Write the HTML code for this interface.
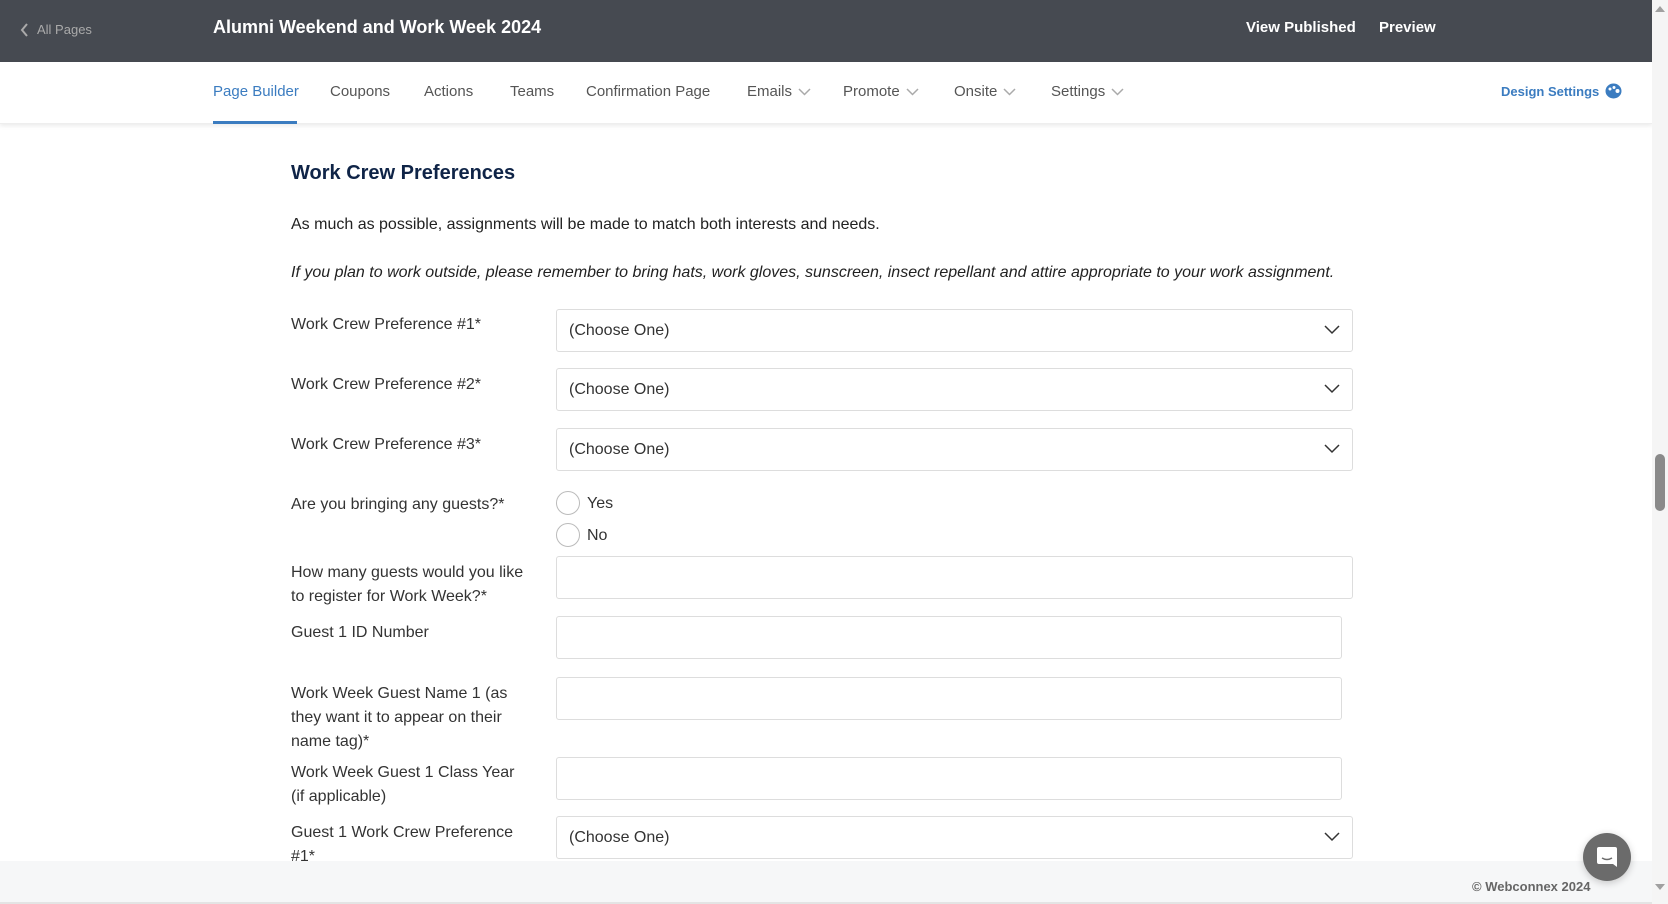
<!DOCTYPE html>
<html><head><meta charset="utf-8"><style>
*{box-sizing:border-box;margin:0;padding:0}
body{width:1668px;height:904px;overflow:hidden;background:#fff;font-family:"Liberation Sans",Arial,sans-serif;position:relative}
.a{position:absolute;white-space:nowrap}
#hdr{position:absolute;left:0;top:0;width:1652px;height:62px;background:#464a51}
#nav{position:absolute;left:0;top:62px;width:1652px;height:62px;background:#fff;box-shadow:0 2px 4px rgba(0,0,0,.08);border-bottom:1px solid #eee}
.nv{position:absolute;top:82px;font-size:15px;color:#555;line-height:20px}
.nv svg{vertical-align:middle;margin-left:6px}
.lbl{position:absolute;left:291px;font-size:16px;color:#333;line-height:24px;white-space:nowrap}
.box{position:absolute;left:556px;width:797px;height:43px;border:1px solid #ddd;border-radius:3px;background:#fff}
.sel{font-size:16px;color:#333;line-height:41px;padding-left:12px}
.sel svg{position:absolute;right:12px;top:15px}
.rad{position:absolute;left:556px;width:24px;height:24px;border:1px solid #bbb;border-radius:50%}
</style></head><body>
<div id="hdr"></div>
<svg class="a" style="left:20px;top:23px" width="10" height="14" viewBox="0 0 10 14"><path d="M7 1L2 7l5 6" fill="none" stroke="#aaa" stroke-width="2"/></svg>
<div class="a" style="left:37px;top:22px;font-size:13px;color:#aaa">All Pages</div>
<div class="a" style="left:213px;top:17px;font-size:18px;font-weight:bold;color:#fff">Alumni Weekend and Work Week 2024</div>
<div class="a" style="left:1246px;top:19px;font-size:15px;color:#fff;font-weight:bold">View Published</div>
<div class="a" style="left:1379px;top:19px;font-size:15px;color:#fff;font-weight:bold">Preview</div>
<div id="nav"></div>
<div class="nv" style="left:213px;color:#3b7cc0">Page Builder</div>
<div class="a" style="left:213px;top:121px;width:84px;height:3px;background:#3b7cc0"></div>
<div class="nv" style="left:330px">Coupons</div>
<div class="nv" style="left:424px">Actions</div>
<div class="nv" style="left:510px">Teams</div>
<div class="nv" style="left:586px">Confirmation Page</div>
<div class="nv" style="left:747px">Emails<svg width="13" height="8"><path d="M1 1l5.5 5.5L12 1" fill="none" stroke="#aaa" stroke-width="1.5"/></svg></div>
<div class="nv" style="left:843px">Promote<svg width="13" height="8"><path d="M1 1l5.5 5.5L12 1" fill="none" stroke="#aaa" stroke-width="1.5"/></svg></div>
<div class="nv" style="left:954px">Onsite<svg width="13" height="8"><path d="M1 1l5.5 5.5L12 1" fill="none" stroke="#aaa" stroke-width="1.5"/></svg></div>
<div class="nv" style="left:1051px">Settings<svg width="13" height="8"><path d="M1 1l5.5 5.5L12 1" fill="none" stroke="#aaa" stroke-width="1.5"/></svg></div>
<div class="a" style="left:1501px;top:84px;font-size:13px;font-weight:bold;color:#3b7cc0">Design Settings</div>
<svg class="a" style="left:1605px;top:83px" width="17" height="16" viewBox="0 0 17 16"><ellipse cx="8.5" cy="8" rx="8" ry="7.5" fill="#3b7cc0"/><circle cx="5" cy="6" r="1.5" fill="#fff"/><circle cx="9" cy="4.5" r="1.5" fill="#fff"/><circle cx="12.5" cy="8" r="2" fill="#fff"/></svg>

<div class="a" style="left:291px;top:162px;font-size:20px;font-weight:bold;color:#0f2447">Work Crew Preferences</div>
<div class="a" style="left:291px;top:216px;font-size:16px;color:#222">As much as possible, assignments will be made to match both interests and needs.</div>
<div class="a" style="left:291px;top:264px;font-size:16px;color:#222;font-style:italic">If you plan to work outside, please remember to bring hats, work gloves, sunscreen, insect repellant and attire appropriate to your work assignment.</div>

<div class="lbl" style="top:313px">Work Crew Preference #1*</div>
<div class="box sel" style="top:309px">(Choose One)<svg width="16" height="10"><path d="M1 1l7 7 7-7" fill="none" stroke="#333" stroke-width="1.5"/></svg></div>
<div class="lbl" style="top:373px">Work Crew Preference #2*</div>
<div class="box sel" style="top:368px">(Choose One)<svg width="16" height="10"><path d="M1 1l7 7 7-7" fill="none" stroke="#333" stroke-width="1.5"/></svg></div>
<div class="lbl" style="top:433px">Work Crew Preference #3*</div>
<div class="box sel" style="top:428px">(Choose One)<svg width="16" height="10"><path d="M1 1l7 7 7-7" fill="none" stroke="#333" stroke-width="1.5"/></svg></div>

<div class="lbl" style="top:493px">Are you bringing any guests?*</div>
<div class="rad" style="top:491px"></div><div class="a" style="left:587px;top:495px;font-size:16px;color:#333">Yes</div>
<div class="rad" style="top:523px"></div><div class="a" style="left:587px;top:527px;font-size:16px;color:#333">No</div>

<div class="lbl" style="top:561px">How many guests would you like<br>to register for Work Week?*</div>
<div class="box" style="top:556px"></div>
<div class="lbl" style="top:621px">Guest 1 ID Number</div>
<div class="box" style="top:616px;width:786px"></div>
<div class="lbl" style="top:682px">Work Week Guest Name 1 (as<br>they want it to appear on their<br>name tag)*</div>
<div class="box" style="top:677px;width:786px"></div>
<div class="lbl" style="top:761px">Work Week Guest 1 Class Year<br>(if applicable)</div>
<div class="box" style="top:757px;width:786px"></div>
<div class="lbl" style="top:821px">Guest 1 Work Crew Preference<br>#1*</div>
<div class="box sel" style="top:816px">(Choose One)<svg width="16" height="10"><path d="M1 1l7 7 7-7" fill="none" stroke="#333" stroke-width="1.5"/></svg></div>

<div class="a" style="left:0;top:861px;width:1652px;height:43px;background:#f6f7f8;border-bottom:2px solid #e4e4e4"></div>
<div class="a" style="left:1472px;top:879px;font-size:13px;font-weight:bold;color:#666">© Webconnex 2024</div>
<div class="a" style="left:1583px;top:833px;width:48px;height:48px;border-radius:50%;background:#6b6b6b;box-shadow:0 2px 8px rgba(0,0,0,.2)"></div>
<svg class="a" style="left:1596px;top:846px" width="22" height="22" viewBox="0 0 22 22"><path d="M3 1h16a2 2 0 0 1 2 2v18l-4-3H3a2 2 0 0 1-2-2V3a2 2 0 0 1 2-2z" fill="#fff"/><path d="M6 12q5 3 10 0" fill="none" stroke="#6b6b6b" stroke-width="1.5"/></svg>

<div class="a" style="left:1652px;top:0;width:16px;height:904px;background:#f5f5f5"></div>
<div class="a" style="left:1655px;top:454px;width:10px;height:57px;background:#8a8a8a;border-radius:5px"></div>
<svg class="a" style="left:1655px;top:6px" width="10" height="6"><path d="M0 6L5 0l5 6z" fill="#a0a0a0"/></svg>
<svg class="a" style="left:1655px;top:884px" width="10" height="6"><path d="M0 0l5 6 5-6z" fill="#a0a0a0"/></svg>
</body></html>
